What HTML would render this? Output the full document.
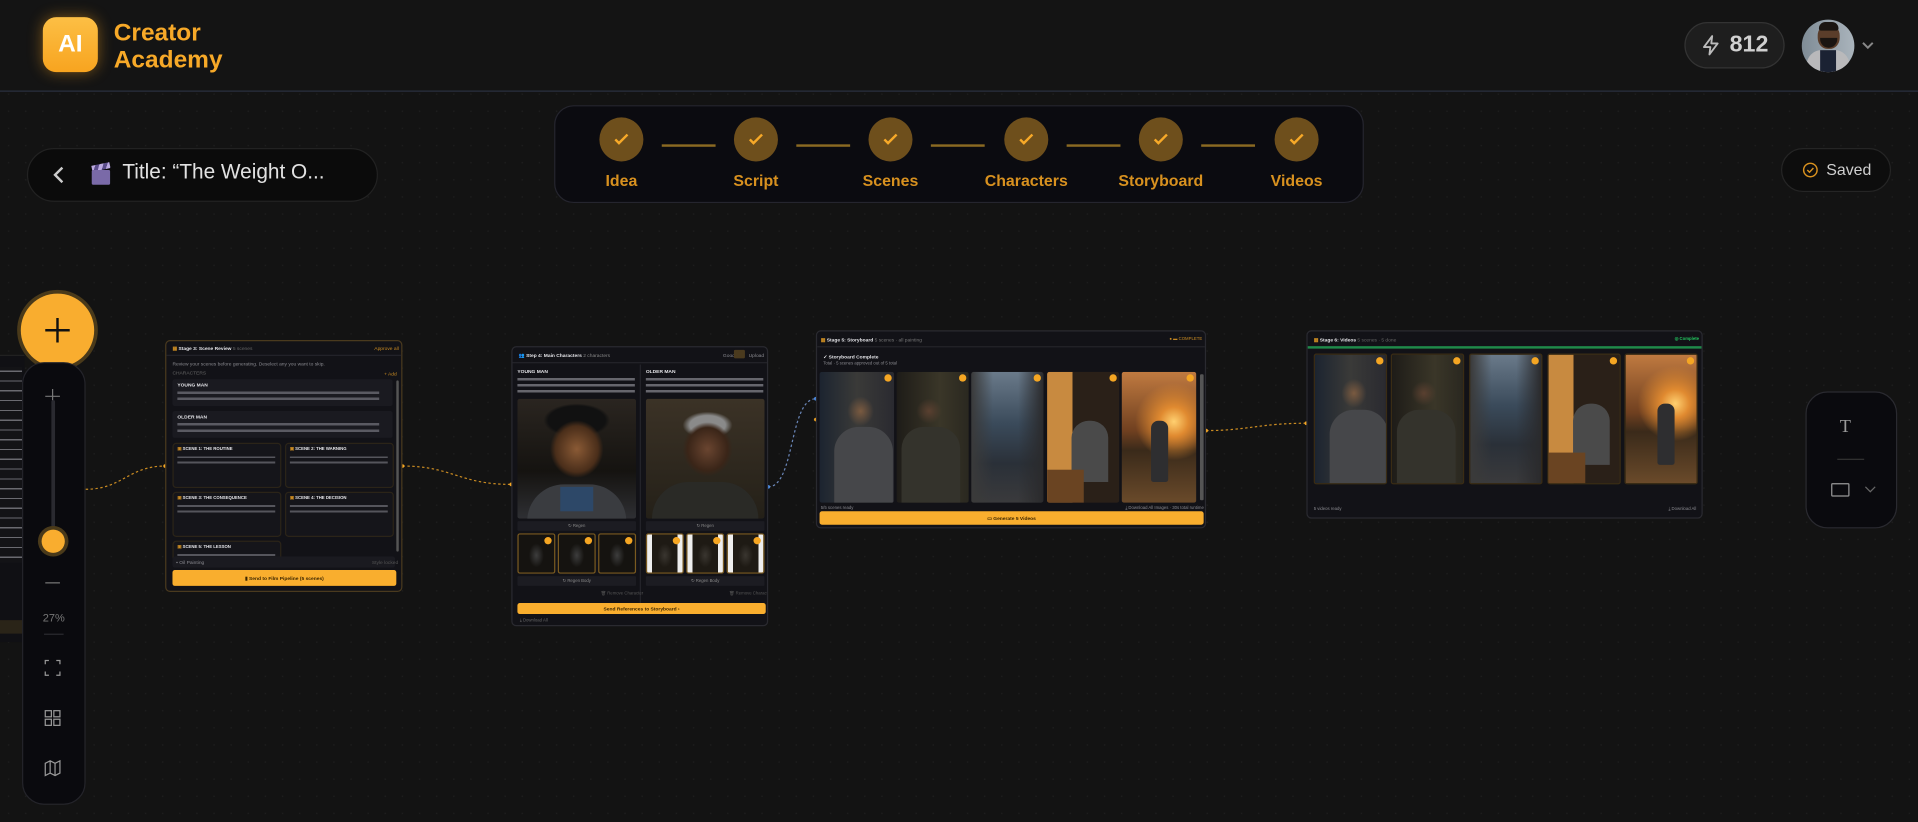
<!DOCTYPE html>
<html><head><meta charset="utf-8"><style>
*{box-sizing:border-box;margin:0;padding:0}
html,body{width:1918px;height:822px;overflow:hidden;background:#131313;font-family:"Liberation Sans",sans-serif}
#root{position:absolute;left:0;top:0;width:1568px;height:672px;transform:scale(1.22321);transform-origin:0 0;background-color:#131313;background-image:radial-gradient(#1d1d1d 0.7px,transparent 0.8px);background-size:14px 14px}
.a{position:absolute}
.card{position:absolute;background:#121217;border:1px solid #2a2a30;border-radius:4px;overflow:hidden}
.t{position:absolute;font-size:4px;color:#8a8a90;white-space:nowrap;line-height:5px}
.h{font-weight:bold;color:#e6e6ea}
.btn{position:absolute;background:#f9ae2e;border-radius:2px;color:#3a2500;font-size:4px;font-weight:bold;text-align:center}
.gbar{position:absolute;background:#1c1c22;border-radius:1px;color:#888;font-size:3.5px;text-align:center}
.img{position:absolute;border-radius:2px;overflow:hidden}
.chk{position:absolute;width:6px;height:6px;border-radius:50%;background:#f5a623;top:2px;right:2px}
.circ{position:absolute;width:36px;height:36px;border-radius:50%;background:#6e4f1c;top:96px}
.circ svg{position:absolute;left:11px;top:11px}
.lbl{position:absolute;top:140px;font-size:13px;font-weight:bold;color:#d8911f;width:100px;text-align:center}
.ln{position:absolute;top:118px;height:2px;width:44px;background:#8b6a22}
.sb{position:absolute;background:#15151a;border:1px solid #2b2418;border-radius:3px}
</style></head><body><div id="root">

<!-- header -->
<div class="a" style="left:0;top:0;width:1568px;height:75px;background:#141414;border-bottom:1px solid #2b3140"></div>
<div class="a" style="left:35px;top:14px;width:45px;height:45px;border-radius:11px;background:linear-gradient(#fcbf45,#f8a41f);box-shadow:0 0 12px rgba(248,164,31,.45);color:#fff;font-weight:bold;font-size:20px;text-align:center;line-height:45px">AI</div>
<div class="a" style="left:93px;top:16px;color:#f7a928;font-weight:bold;font-size:20px;line-height:22px">Creator<br>Academy</div>
<div class="a" style="left:1377px;top:18px;width:82px;height:38px;border-radius:19px;background:#1e1e1e;border:1px solid #333"></div>
<svg class="a" style="left:1390px;top:28px" width="18" height="18" viewBox="0 0 24 24" fill="none" stroke="#bbb" stroke-width="2" stroke-linejoin="round"><path d="M13 2L4 14h7l-1 8 9-12h-7z"/></svg>
<div class="a" style="left:1414px;top:26px;color:#d0d0d0;font-weight:bold;font-size:19px">812</div>
<div class="a" style="left:1473px;top:16px;width:43px;height:43px;border-radius:50%;overflow:hidden;background:linear-gradient(90deg,#7f8c96,#aab4bc)">
<div class="a" style="left:13px;top:4px;width:18px;height:20px;border-radius:45%;background:#5a3d2a"></div>
<div class="a" style="left:14px;top:2px;width:16px;height:7px;border-radius:6px 6px 2px 2px;background:#1a1512"></div>
<div class="a" style="left:15px;top:15px;width:14px;height:8px;border-radius:0 0 7px 7px;background:#1a1512"></div>
<div class="a" style="left:4px;top:25px;width:35px;height:22px;border-radius:12px 12px 0 0;background:#b9b9bb"></div>
<div class="a" style="left:15px;top:25px;width:13px;height:20px;background:#1b2233"></div>
</div>
<svg class="a" style="left:1521px;top:32px" width="12" height="10" viewBox="0 0 12 10"><path d="M2 3l4 4 4-4" stroke="#888" stroke-width="1.6" fill="none"/></svg>

<!-- back pill -->
<div class="a" style="left:22px;top:121px;width:287px;height:44px;border-radius:22px;background:#0b0b0b;border:1px solid #222"></div>
<svg class="a" style="left:42px;top:135px" width="12" height="16" viewBox="0 0 12 16"><path d="M9 2L3 8l6 6" stroke="#ccc" stroke-width="2" fill="none"/></svg>
<div class="a" style="left:75px;top:134px;width:15px;height:17px"><div class="a" style="left:0;top:0;width:15px;height:5px;background:repeating-linear-gradient(120deg,#bba9e0 0 3px,#5b4d8a 3px 6px);transform:rotate(-12deg)"></div><div class="a" style="left:0;top:5px;width:15px;height:12px;background:#7a6aa8;border-radius:1px"></div></div>
<div class="a" style="left:100px;top:131px;font-size:17px;color:#e2e2e2">Title: “The Weight O...</div>

<!-- stepper -->
<div class="a" style="left:453px;top:86px;width:662px;height:80px;border-radius:16px;background:#0b0b10;border:1px solid #25252e"></div>
<div class="circ" style="left:490px"><svg width="14" height="14" viewBox="0 0 14 14"><path d="M2 7l3 3 7-7" stroke="#f7a928" stroke-width="2" fill="none"/></svg></div>
<div class="circ" style="left:600px"><svg width="14" height="14" viewBox="0 0 14 14"><path d="M2 7l3 3 7-7" stroke="#f7a928" stroke-width="2" fill="none"/></svg></div>
<div class="circ" style="left:710px"><svg width="14" height="14" viewBox="0 0 14 14"><path d="M2 7l3 3 7-7" stroke="#f7a928" stroke-width="2" fill="none"/></svg></div>
<div class="circ" style="left:821px"><svg width="14" height="14" viewBox="0 0 14 14"><path d="M2 7l3 3 7-7" stroke="#f7a928" stroke-width="2" fill="none"/></svg></div>
<div class="circ" style="left:931px"><svg width="14" height="14" viewBox="0 0 14 14"><path d="M2 7l3 3 7-7" stroke="#f7a928" stroke-width="2" fill="none"/></svg></div>
<div class="circ" style="left:1042px"><svg width="14" height="14" viewBox="0 0 14 14"><path d="M2 7l3 3 7-7" stroke="#f7a928" stroke-width="2" fill="none"/></svg></div>
<div class="ln" style="left:541px"></div><div class="ln" style="left:651px"></div><div class="ln" style="left:761px"></div><div class="ln" style="left:872px"></div><div class="ln" style="left:982px"></div>
<div class="lbl" style="left:458px">Idea</div><div class="lbl" style="left:568px">Script</div><div class="lbl" style="left:678px">Scenes</div><div class="lbl" style="left:789px">Characters</div><div class="lbl" style="left:899px">Storyboard</div><div class="lbl" style="left:1010px">Videos</div>

<!-- saved -->
<div class="a" style="left:1456px;top:121px;width:90px;height:36px;border-radius:18px;background:#0d0d0d;border:1px solid #252525"></div>
<svg class="a" style="left:1473px;top:132px" width="14" height="14" viewBox="0 0 14 14"><circle cx="7" cy="7" r="5.5" stroke="#d8911f" stroke-width="1.2" fill="none"/><path d="M4.5 7l1.8 1.8 3.2-3.5" stroke="#d8911f" stroke-width="1.2" fill="none"/></svg>
<div class="a" style="left:1493px;top:131px;font-size:13px;color:#cfcfcf">Saved</div>

<!-- left partial card -->
<div class="a" style="left:0;top:290px;width:20px;height:235px;background:#101014;border-top:1px solid #222"></div>
<div class="a" style="left:0;top:300px;width:18px;height:160px;background:repeating-linear-gradient(#131316 0 3px,#6a6a70 3px 4px,#131316 4px 8px)"></div>
<div class="a" style="left:0;top:507px;width:20px;height:11px;background:#2a2418"></div>

<!-- connectors -->
<svg class="a" style="left:0;top:0" width="1568" height="672">
<g fill="none" stroke="#c88a22" stroke-width="1" stroke-dasharray="2 2">
<path d="M70 400 C100 400,105 381,135 381"/>
<path d="M329 381 C370 381,375 396,418 396"/>
<path d="M986 352 C1020 352,1030 346,1068 346"/>
</g>
<path d="M628 398 C650 398,645 326,667 326" fill="none" stroke="#6a86b8" stroke-width="1" stroke-dasharray="2 2"/>
<circle cx="329" cy="381" r="1.5" fill="#f5a623"/><circle cx="135" cy="381" r="1.5" fill="#f5a623"/><circle cx="418" cy="396" r="1.5" fill="#f5a623"/><circle cx="628" cy="398" r="1.5" fill="#4d8ee8"/><circle cx="667" cy="326" r="1.5" fill="#4d8ee8"/><circle cx="667" cy="343" r="1.5" fill="#f5a623"/><circle cx="986" cy="352" r="1.5" fill="#f5a623"/><circle cx="1068" cy="346" r="1.5" fill="#f5a623"/>
</svg>

<!-- plus button -->
<div class="a" style="left:17px;top:240px;width:60px;height:60px;border-radius:50%;background:#f9ad2f;box-shadow:0 0 0 3px #4a3a1a"></div>
<svg class="a" style="left:36px;top:259px" width="22" height="22" viewBox="0 0 22 22"><path d="M11 1v20M1 11h20" stroke="#111" stroke-width="2"/></svg>

<!-- zoom panel -->
<div class="a" style="left:18px;top:296px;width:52px;height:362px;border-radius:18px;background:#0a0a0e;border:1px solid #24242a"></div>
<svg class="a" style="left:36px;top:317px" width="14" height="14" viewBox="0 0 14 14"><path d="M7 1v12M1 7h12" stroke="#777" stroke-width="1"/></svg>
<div class="a" style="left:42px;top:327px;width:3px;height:115px;background:#2a2a30;border-radius:2px"></div>
<div class="a" style="left:34px;top:433px;width:19px;height:19px;border-radius:50%;background:#f9ad2f;box-shadow:0 0 0 3px #4a3a1a"></div>
<div class="a" style="left:37px;top:476px;width:12px;height:1px;background:#777"></div>
<div class="a" style="left:30px;top:500px;width:28px;text-align:center;font-size:9px;color:#777">27%</div>
<div class="a" style="left:36px;top:518px;width:16px;height:1px;background:#2a2a30"></div>
<svg class="a" style="left:36px;top:539px" width="14" height="14" viewBox="0 0 14 14" fill="none" stroke="#999" stroke-width="1"><path d="M1 4V1h3M10 1h3v3M13 10v3h-3M4 13H1v-3"/></svg>
<svg class="a" style="left:36px;top:580px" width="14" height="14" viewBox="0 0 14 14" fill="none" stroke="#999" stroke-width="1"><rect x="1" y="1" width="5" height="5"/><rect x="8" y="1" width="5" height="5"/><rect x="1" y="8" width="5" height="5"/><rect x="8" y="8" width="5" height="5"/></svg>
<svg class="a" style="left:36px;top:621px" width="14" height="14" viewBox="0 0 14 14" fill="none" stroke="#999" stroke-width="1"><path d="M1 3l4-2 4 2 4-2v10l-4 2-4-2-4 2zM5 1v10M9 3v10"/></svg>

<!-- card 1: scene review -->
<div class="card" style="left:135px;top:278px;width:194px;height:206px;border-color:#4a3a1e">
<div class="a" style="left:0;top:0;width:194px;height:12px;border-bottom:1px solid #24242a"></div>
<div class="t h" style="left:5px;top:3px"><span style="color:#c88a22">▦</span> Stage 3: Scene Review <span style="color:#666;font-weight:normal">5 scenes</span></div>
<div class="t" style="left:170px;top:3px;color:#c88a22">Approve all</div>
<div class="t" style="left:5px;top:16px">Review your scenes before generating. Deselect any you want to skip.</div>
<div class="t" style="left:5px;top:23px;color:#666">CHARACTERS</div><div class="t" style="left:178px;top:24px;color:#c88a22">+ Add</div>
<div class="a" style="left:5px;top:31px;width:180px;height:22px;background:#1a1a20;border-radius:2px"></div>
<div class="t h" style="left:9px;top:33px">YOUNG MAN</div>
<div class="a" style="left:9px;top:40px;width:165px;height:9px;background:repeating-linear-gradient(#1a1a20 0 1px,#5a5a62 1px 3px,#1a1a20 3px 5px)"></div>
<div class="a" style="left:5px;top:57px;width:180px;height:22px;background:#1a1a20;border-radius:2px"></div>
<div class="t h" style="left:9px;top:59px">OLDER MAN</div>
<div class="a" style="left:9px;top:66px;width:165px;height:9px;background:repeating-linear-gradient(#1a1a20 0 1px,#5a5a62 1px 3px,#1a1a20 3px 5px)"></div>
<div class="sb" style="left:5px;top:83px;width:89px;height:37px"></div><div class="sb" style="left:97px;top:83px;width:89px;height:37px"></div>
<div class="sb" style="left:5px;top:123px;width:89px;height:37px"></div><div class="sb" style="left:97px;top:123px;width:89px;height:37px"></div>
<div class="sb" style="left:5px;top:163px;width:89px;height:20px"></div>
<div class="t h" style="left:9px;top:86px;font-size:3.5px"><span style="color:#c88a22">▣</span> SCENE 1: THE ROUTINE</div>
<div class="t h" style="left:101px;top:86px;font-size:3.5px"><span style="color:#c88a22">▣</span> SCENE 2: THE WARNING</div>
<div class="t h" style="left:9px;top:126px;font-size:3.5px"><span style="color:#c88a22">▣</span> SCENE 3: THE CONSEQUENCE</div>
<div class="t h" style="left:101px;top:126px;font-size:3.5px"><span style="color:#c88a22">▣</span> SCENE 4: THE DECISION</div>
<div class="t h" style="left:9px;top:166px;font-size:3.5px"><span style="color:#c88a22">▣</span> SCENE 5: THE LESSON</div>
<div class="a" style="left:9px;top:93px;width:80px;height:9px;background:repeating-linear-gradient(#15151a 0 1px,#55555c 1px 2.5px,#15151a 2.5px 4.3px)"></div>
<div class="a" style="left:101px;top:93px;width:80px;height:9px;background:repeating-linear-gradient(#15151a 0 1px,#55555c 1px 2.5px,#15151a 2.5px 4.3px)"></div>
<div class="a" style="left:9px;top:133px;width:80px;height:9px;background:repeating-linear-gradient(#15151a 0 1px,#55555c 1px 2.5px,#15151a 2.5px 4.3px)"></div>
<div class="a" style="left:101px;top:133px;width:80px;height:9px;background:repeating-linear-gradient(#15151a 0 1px,#55555c 1px 2.5px,#15151a 2.5px 4.3px)"></div>
<div class="a" style="left:9px;top:173px;width:80px;height:9px;background:repeating-linear-gradient(#15151a 0 1px,#55555c 1px 2.5px,#15151a 2.5px 4.3px)"></div>
<div class="a" style="left:188px;top:32px;width:2px;height:140px;background:#555;border-radius:1px"></div>
<div class="a" style="left:5px;top:176px;width:182px;height:9px;background:#1a1a20;border-radius:2px"></div>
<div class="t" style="left:8px;top:178px">▪ Oil Painting</div><div class="t" style="left:168px;top:178px;color:#555">Style locked</div>
<div class="btn" style="left:5px;top:187px;width:183px;height:13px;line-height:13px">▮ Send to Film Pipeline (5 scenes)</div>
</div>

<!-- card 2: characters -->
<div class="card" style="left:418px;top:283px;width:210px;height:229px">
<div class="a" style="left:0;top:0;width:210px;height:13px;border-bottom:1px solid #24242a"></div>
<div class="t h" style="left:5px;top:4px"><span style="color:#c88a22">👥</span> Step 4: Main Characters <span style="color:#888;font-weight:normal">2 characters</span></div>
<div class="t" style="left:172px;top:4px">Good</div><div class="a" style="left:181px;top:2px;width:9px;height:7px;background:#4a3a1e;border-radius:1px"></div><div class="t" style="left:193px;top:4px">Upload</div>
<div class="a" style="left:104px;top:14px;width:1px;height:200px;background:#24242a"></div>
<div class="t h" style="left:4px;top:17px;font-size:4px">YOUNG MAN</div><div class="t h" style="left:109px;top:17px;font-size:4px">OLDER MAN</div>
<div class="a" style="left:4px;top:24px;width:96px;height:14px;background:repeating-linear-gradient(#121217 0 1px,#66666d 1px 3px,#121217 3px 5px)"></div>
<div class="a" style="left:109px;top:24px;width:96px;height:14px;background:repeating-linear-gradient(#121217 0 1px,#66666d 1px 3px,#121217 3px 5px)"></div>
<div class="img" style="left:4px;top:42px;width:97px;height:98px;background:radial-gradient(ellipse 30% 32% at 50% 42%,#8a5a35,#4a2e1a 60%,transparent 75%),radial-gradient(ellipse 40% 20% at 50% 18%,#111 60%,transparent 70%),linear-gradient(#2a2520,#151310 60%,#2e2f33)"><div class="a" style="left:8px;top:70px;width:81px;height:30px;border-radius:30px 30px 0 0;background:#3a3c40"></div><div class="a" style="left:35px;top:72px;width:27px;height:20px;background:#2d4868"></div></div>
<div class="img" style="left:109px;top:42px;width:97px;height:98px;background:radial-gradient(ellipse 28% 30% at 52% 42%,#6a4530,#3a2518 60%,transparent 75%),radial-gradient(ellipse 30% 16% at 52% 22%,#8a8a8a 50%,transparent 70%),linear-gradient(#3b3226,#242018)"><div class="a" style="left:5px;top:68px;width:87px;height:32px;border-radius:30px 30px 0 0;background:#2a2a26"></div></div>
<div class="gbar" style="left:4px;top:142px;width:97px;height:8px;line-height:8px">↻ Regen</div><div class="gbar" style="left:109px;top:142px;width:97px;height:8px;line-height:8px">↻ Regen</div>
<div class="img" style="left:4px;top:152px;width:31px;height:33px;border:1px solid #7a5a20;background:radial-gradient(ellipse 30% 45% at 50% 55%,#3d3d3d,#151310 70%)"><div class="chk"></div></div>
<div class="img" style="left:37px;top:152px;width:31px;height:33px;border:1px solid #7a5a20;background:radial-gradient(ellipse 30% 45% at 50% 55%,#3d3d3d,#151310 70%)"><div class="chk"></div></div>
<div class="img" style="left:70px;top:152px;width:31px;height:33px;border:1px solid #7a5a20;background:radial-gradient(ellipse 30% 45% at 50% 55%,#3d3d3d,#151310 70%)"><div class="chk"></div></div>
<div class="img" style="left:109px;top:152px;width:31px;height:33px;border:1px solid #7a5a20;background:linear-gradient(90deg,#eee 0 14%,transparent 14% 86%,#eee 86%),radial-gradient(ellipse 30% 45% at 50% 55%,#3a3630,#1e1a14 70%)"><div class="chk"></div></div>
<div class="img" style="left:142px;top:152px;width:31px;height:33px;border:1px solid #7a5a20;background:linear-gradient(90deg,#eee 0 14%,transparent 14% 86%,#eee 86%),radial-gradient(ellipse 30% 45% at 50% 55%,#3a3630,#1e1a14 70%)"><div class="chk"></div></div>
<div class="img" style="left:175px;top:152px;width:31px;height:33px;border:1px solid #7a5a20;background:linear-gradient(90deg,#eee 0 14%,transparent 14% 86%,#eee 86%),radial-gradient(ellipse 30% 45% at 50% 55%,#3a3630,#1e1a14 70%)"><div class="chk"></div></div>
<div class="gbar" style="left:4px;top:187px;width:97px;height:8px;line-height:8px">↻ Regen Body</div><div class="gbar" style="left:109px;top:187px;width:97px;height:8px;line-height:8px">↻ Regen Body</div>
<div class="t" style="left:72px;top:199px;color:#555;font-size:3.5px">🗑 Remove Character</div><div class="t" style="left:177px;top:199px;color:#555;font-size:3.5px">🗑 Remove Character</div>
<div class="btn" style="left:4px;top:209px;width:203px;height:9px;line-height:9px">Send References to Storyboard ›</div>
<div class="t" style="left:6px;top:221px;color:#666;font-size:3.5px">⤓ Download All</div>
</div>

<!-- card 3: storyboard -->
<div class="card" style="left:667px;top:270px;width:319px;height:162px">
<div class="a" style="left:0;top:0;width:319px;height:13px;border-bottom:1px solid #24242a"></div>
<div class="t h" style="left:3px;top:4px"><span style="color:#c88a22">▦</span> Stage 5: Storyboard <span style="color:#777;font-weight:normal">5 scenes · all painting</span></div>
<div class="t" style="left:288px;top:4px;color:#c88a22;font-size:3.5px">● ▬ COMPLETE</div>
<div class="t h" style="left:5px;top:18px">✓ Storyboard Complete</div>
<div class="t" style="left:5px;top:24px;font-size:3.5px">Total · 5 scenes approved out of 5 total</div>
<div class="img" style="left:2px;top:33px;width:61px;height:107px;background:radial-gradient(ellipse 22% 14% at 55% 30%,#7a5a40,transparent 80%),linear-gradient(90deg,#1c2430,#3a3a38 50%,#2a2a30)"><div class="a" style="left:12px;top:45px;width:48px;height:62px;border-radius:20px 20px 0 0;background:#46474a"></div><div class="chk"></div></div>
<div class="img" style="left:65px;top:33px;width:59px;height:107px;background:radial-gradient(ellipse 22% 12% at 45% 30%,#5a4030,transparent 80%),linear-gradient(90deg,#1e1c18,#3a3628 60%,#2a2820)"><div class="a" style="left:4px;top:45px;width:48px;height:62px;border-radius:18px 18px 0 0;background:#34332c"></div><div class="chk"></div></div>
<div class="img" style="left:126px;top:33px;width:59px;height:107px;background:linear-gradient(90deg,#3a3a3a,transparent 30%,transparent 65%,#2a2a2c),linear-gradient(#6a7a8a,#3a4a5a 40%,#2a3038 70%,#3a3a3c)"><div class="chk"></div></div>
<div class="img" style="left:188px;top:33px;width:59px;height:107px;background:linear-gradient(90deg,#c88a40 0 35%,#2a2018 35%),linear-gradient(#4a3422,#2a2018)"><div class="a" style="left:20px;top:40px;width:30px;height:50px;border-radius:14px 14px 0 0;background:#4a4a4a"></div><div class="a" style="left:0;top:80px;width:30px;height:27px;background:#6a4422"></div><div class="chk"></div></div>
<div class="img" style="left:249px;top:33px;width:61px;height:107px;background:radial-gradient(circle at 70% 38%,#ffd070,#e08a30 15%,transparent 40%),linear-gradient(#c07a40,#704020 45%,#3a2a1a 60%,#6a4a2a)"><div class="a" style="left:24px;top:40px;width:14px;height:50px;border-radius:6px 6px 2px 2px;background:#2e2e30"></div><div class="chk"></div></div>
<div class="a" style="left:313px;top:35px;width:3px;height:103px;background:#555;border-radius:1px"></div>
<div class="t" style="left:3px;top:142px;font-size:3.5px">5/5 scenes ready</div>
<div class="t" style="left:252px;top:142px;font-size:3.5px">⤓ Download All Images · 30s total runtime</div>
<div class="btn" style="left:2px;top:147px;width:314px;height:11px;line-height:11px">▭ Generate 5 Videos</div>
</div>

<!-- card 4: videos -->
<div class="card" style="left:1068px;top:270px;width:324px;height:154px">
<div class="t h" style="left:5px;top:4px"><span style="color:#c88a22">▦</span> Stage 6: Videos <span style="color:#666;font-weight:normal">5 scenes · 5 done</span></div>
<div class="t" style="left:300px;top:4px;color:#22c55e;font-weight:bold;font-size:3.5px">◎ Complete</div>
<div class="a" style="left:0;top:12px;width:324px;height:2px;background:#1f8a4a"></div>
<div class="img" style="left:5px;top:18px;width:60px;height:107px;border:1px solid #3a2c14;background:radial-gradient(ellipse 22% 14% at 55% 30%,#7a5a40,transparent 80%),linear-gradient(90deg,#1c2430,#3a3a38 50%,#2a2a30)"><div class="a" style="left:12px;top:45px;width:48px;height:62px;border-radius:20px 20px 0 0;background:#46474a"></div><div class="chk"></div></div>
<div class="img" style="left:68px;top:18px;width:60px;height:107px;border:1px solid #3a2c14;background:radial-gradient(ellipse 22% 12% at 45% 30%,#5a4030,transparent 80%),linear-gradient(90deg,#1e1c18,#3a3628 60%,#2a2820)"><div class="a" style="left:4px;top:45px;width:48px;height:62px;border-radius:18px 18px 0 0;background:#34332c"></div><div class="chk"></div></div>
<div class="img" style="left:132px;top:18px;width:60px;height:107px;border:1px solid #3a2c14;background:linear-gradient(90deg,#3a3a3a,transparent 30%,transparent 65%,#2a2a2c),linear-gradient(#6a7a8a,#3a4a5a 40%,#2a3038 70%,#3a3a3c)"><div class="chk"></div></div>
<div class="img" style="left:196px;top:18px;width:60px;height:107px;border:1px solid #3a2c14;background:linear-gradient(90deg,#c88a40 0 35%,#2a2018 35%),linear-gradient(#4a3422,#2a2018)"><div class="a" style="left:20px;top:40px;width:30px;height:50px;border-radius:14px 14px 0 0;background:#4a4a4a"></div><div class="a" style="left:0;top:80px;width:30px;height:27px;background:#6a4422"></div><div class="chk"></div></div>
<div class="img" style="left:259px;top:18px;width:60px;height:107px;border:1px solid #3a2c14;background:radial-gradient(circle at 70% 38%,#ffd070,#e08a30 15%,transparent 40%),linear-gradient(#c07a40,#704020 45%,#3a2a1a 60%,#6a4a2a)"><div class="a" style="left:26px;top:40px;width:14px;height:50px;border-radius:6px 6px 2px 2px;background:#2e2e30"></div><div class="chk"></div></div>
<div class="t" style="left:5px;top:143px;font-size:3.5px">5 videos ready</div>
<div class="t" style="left:295px;top:143px;font-size:3.5px">⤓ Download All</div>
</div>

<!-- right tool panel -->
<div class="a" style="left:1476px;top:320px;width:75px;height:112px;border-radius:18px;background:#0a0a0e;border:1px solid #2a2a30"></div>
<div class="a" style="left:1504px;top:341px;font-size:15px;color:#999;font-family:'Liberation Serif',serif">T</div>
<div class="a" style="left:1502px;top:375px;width:22px;height:1px;background:#333"></div>
<div class="a" style="left:1497px;top:395px;width:15px;height:11px;border:1.5px solid #999;border-radius:1px"></div>
<svg class="a" style="left:1524px;top:396px" width="10" height="8" viewBox="0 0 10 8"><path d="M1 2l4 4 4-4" stroke="#666" stroke-width="1" fill="none"/></svg>

</div></body></html>
